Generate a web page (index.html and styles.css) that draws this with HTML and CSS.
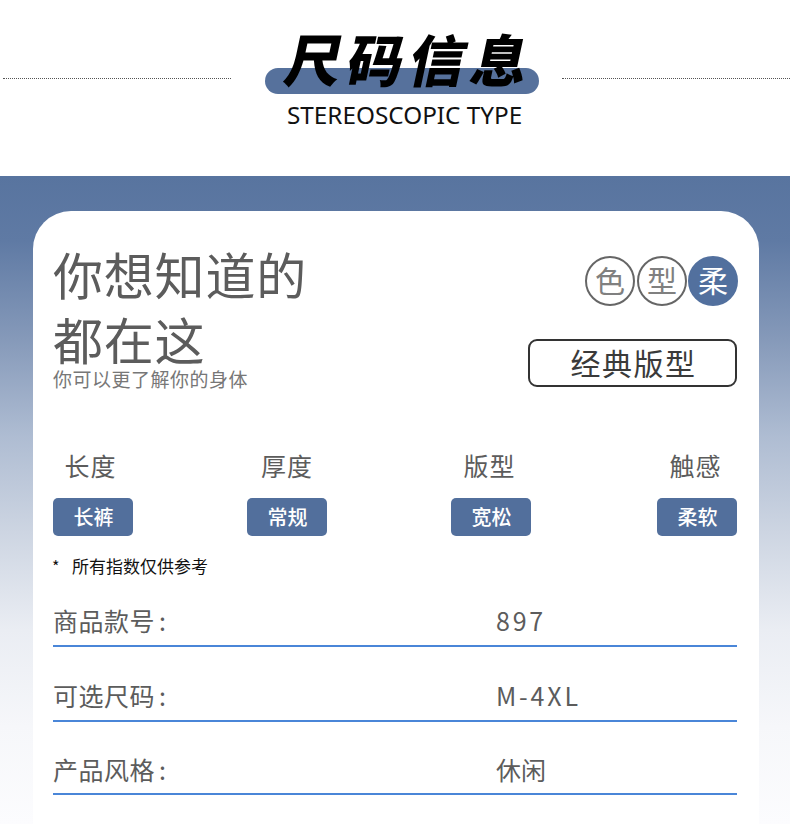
FILE: index.html
```html
<!DOCTYPE html>
<html lang="zh-CN">
<head>
<meta charset="utf-8">
<title>尺码信息</title>
<link rel="stylesheet" href="styles.css">
</head>
<body>
<header class="head">
  <div class="rule"></div>
  <div class="head-mid">
    <div class="pill"></div>
    <h1 class="title">尺码信息</h1>
    <p class="sub-en">STEREOSCOPIC TYPE</p>
  </div>
  <div class="rule"></div>
</header>
<main class="band">
  <section class="card">
    <div class="intro">
      <div class="intro-text">
        <h2 class="big">你想知道的<br>都在这</h2>
        <p class="lead">你可以更了解你的身体</p>
      </div>
      <div class="intro-side">
        <div class="dots">
          <span class="dot">色</span>
          <span class="dot">型</span>
          <span class="dot dot-on">柔</span>
        </div>
        <div class="tagbox">经典版型</div>
      </div>
    </div>
    <div class="attrs">
      <div class="attr attr-a"><span class="attr-name">长度</span><span class="chip">长裤</span></div>
      <div class="attr attr-b"><span class="attr-name">厚度</span><span class="chip">常规</span></div>
      <div class="attr attr-c"><span class="attr-name">版型</span><span class="chip">宽松</span></div>
      <div class="attr attr-d"><span class="attr-name">触感</span><span class="chip">柔软</span></div>
    </div>
    <p class="note"><span class="star">*</span>所有指数仅供参考</p>
    <div class="row row-first"><span class="key">商品款号<span class="colon">:</span></span><span class="val val-num">897</span></div>
    <div class="row row-second"><span class="key">可选尺码<span class="colon">:</span></span><span class="val val-num">M-4XL</span></div>
    <div class="row row-third"><span class="key">产品风格<span class="colon">:</span></span><span class="val">休闲</span></div>
  </section>
</main>
</body>
</html>
```
FILE: styles.css
```css
* { box-sizing: border-box; margin: 0; padding: 0; }
html, body { background: #fff; }
body {
  width: 790px;
  height: 824px;
  overflow: hidden;
  font-family: "Noto Sans CJK SC", "Noto Sans", sans-serif;
}
.head {
  height: 176px;
  display: flex;
  align-items: flex-start;
  padding-left: 3px;
}
.rule {
  flex: none;
  width: 228px;
  height: 1px;
  margin-top: 78px;
  border-top: 1px dotted #555;
}
.head-mid {
  position: relative;
  flex: none;
  width: 331px;
  height: 176px;
}
.pill {
  position: absolute;
  left: 34px;
  top: 68px;
  width: 274px;
  height: 26px;
  border-radius: 13px;
  background: #56719c;
}
.title {
  position: absolute;
  left: 56px;
  top: 19px;
  font-size: 56px;
  line-height: 78px;
  font-weight: 900;
  letter-spacing: 6px;
  color: #000;
  white-space: nowrap;
  transform: skewX(-12deg);
}
.sub-en {
  position: absolute;
  left: 56px;
  top: 98px;
  font-family: "Noto Sans", sans-serif;
  font-size: 24.3px;
  line-height: 34px;
  color: #111;
  white-space: nowrap;
}
.band {
  height: 648px;
  padding: 35px 31px 0 33px;
  background: linear-gradient(180deg, #58749f 0%, #5f7aa4 10%, #8599b9 25%, #aebcd2 40%, #cdd5e2 55%, #eaedf3 70%, #f6f7fa 85%, #fcfcfe 100%);
}
.card {
  height: 613px;
  padding: 0 22px 0 20px;
  background: #fff;
  border-radius: 38px 38px 0 0;
}
.intro {
  display: flex;
  justify-content: space-between;
  padding-top: 30px;
  height: 230px;
}
.big {
  font-size: 50px;
  line-height: 65px;
  font-weight: 400;
  letter-spacing: .8px;
  color: #5c5c5c;
}
.lead {
  margin-top: -5px;
  font-size: 19px;
  line-height: 26px;
  letter-spacing: .5px;
  color: #777;
}
.intro-side {
  display: flex;
  flex-direction: column;
  align-items: flex-end;
  padding-top: 15px;
}
.dots { display: flex; gap: 1px; margin-right: -1px; }
.dot {
  width: 50px;
  height: 50px;
  border: 2px solid #666;
  border-radius: 50%;
  font-size: 30px;
  font-weight: 400;
  line-height: 42px;
  text-align: center;
  color: #808080;
}
.dot:first-child { margin-right: 1px; }
.dot-on { background: #52709e; border-color: #52709e; color: #fff; }
.tagbox {
  width: 209px;
  height: 48px;
  margin-top: 33px;
  padding-left: 2px;
  border: 2px solid #333;
  border-radius: 9px;
  font-size: 30px;
  font-weight: 400;
  line-height: 42px;
  letter-spacing: 1.5px;
  text-align: center;
  color: #3a3a3a;
}
.attrs { display: flex; margin-top: 6px; }
.attr {
  flex: none;
  width: 80px;
  display: flex;
  flex-direction: column;
  align-items: center;
}
.attr-b { margin-left: 114px; }
.attr-c { margin-left: 124px; }
.attr-d { margin-left: 126px; }
.attr-name {
  flex: none;
  width: 120px;
  text-align: center;
  font-size: 25px;
  line-height: 36px;
  font-weight: 400;
  letter-spacing: 1px;
  color: #5c5c5c;
}
.attr-a .attr-name { margin-left: -5px; }
.attr-c .attr-name { margin-left: -3px; }
.attr-d .attr-name { margin-left: -3px; }
.chip {
  width: 80px;
  height: 38px;
  margin-top: 15px;
  padding-left: 1px;
  border-radius: 5px;
  background: #526f9c;
  font-size: 20px;
  line-height: 38px;
  font-weight: 500;
  text-align: center;
  color: #fff;
}
.note {
  display: flex;
  margin-top: 18px;
  font-size: 17px;
  line-height: 24px;
  color: #111;
}
.star { width: 20px; font-size: 16px; margin-left: -1px; padding-right: 1px; }
.row {
  display: flex;
  align-items: center;
  padding-top: 23px;
  border-bottom: 2px solid #4a86d8;
  font-size: 25px;
  font-weight: 400;
  color: #5c5c5c;
}
.row-first { height: 69px; padding-top: 17px; }
.row-second { height: 75px; }
.row-third { height: 73px; }
.key { flex: none; width: 443px; letter-spacing: .5px; }
.colon { margin-left: 4px; }
.val-num { letter-spacing: 2.8px; }
```
